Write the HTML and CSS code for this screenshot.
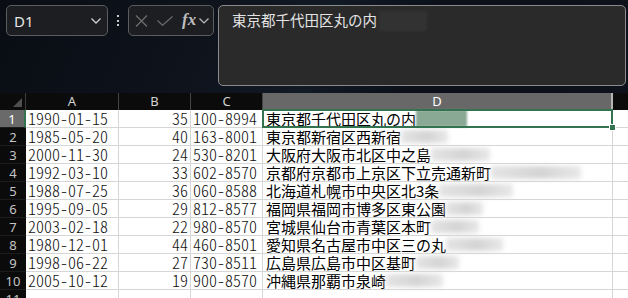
FILE: index.html
```html
<!DOCTYPE html>
<html lang="ja">
<head>
<meta charset="utf-8">
<title>Sheet</title>
<link rel="stylesheet" href="styles.css">
</head>
<body>
<div class="topbar">
  <div class="namebox">
    <span class="ref">D1</span>
    <svg class="chev" width="10" height="6" viewBox="0 0 10 6"><polyline points="0.5,0.5 5,5 9.5,0.5" fill="none" stroke="#cfcfcf" stroke-width="1.3"/></svg>
  </div>
  <div class="dots"><i></i><i></i><i></i></div>
  <div class="fxbox">
    <svg class="icon" width="13" height="12" viewBox="0 0 13 12"><path d="M1 0.5 L12 11.5 M12 0.5 L1 11.5" stroke="#6f6f6f" stroke-width="1.2" fill="none"/></svg>
    <svg class="icon" width="16" height="10" viewBox="0 0 16 10"><polyline points="0.5,4.5 5.5,9.3 15.5,0.5" stroke="#6a6a6a" stroke-width="1.2" fill="none"/></svg>
    <span class="fx">fx</span>
    <svg class="chev2" width="10" height="6" viewBox="0 0 10 6"><polyline points="0.5,0.5 5,5 9.5,0.5" fill="none" stroke="#bdbdbd" stroke-width="1.2"/></svg>
  </div>
  <div class="formula">
    <span class="ftext">東京都千代田区丸の内</span><span class="fblur"></span>
  </div>
</div>

<div class="sheet">
  <div class="corner"><svg width="9" height="9" viewBox="0 0 9 9"><polygon points="9,0 9,9 0,9" fill="#4f4f4f"/></svg></div>
  <div class="ch">A</div><div class="ch">B</div><div class="ch">C</div><div class="ch sel">D</div><div class="ch last"></div>

  <div class="rh rsel">1</div><div class="c t">1990-01-15</div><div class="c n">35</div><div class="c t">100-8994</div><div class="c d active"><span>東京都千代田区丸の内</span><span class="gblur" style="width:51px"></span><i class="handle"></i></div><div class="c e"></div>
  <div class="rh">2</div><div class="c t">1985-05-20</div><div class="c n">40</div><div class="c t">163-8001</div><div class="c d"><span>東京都新宿区西新宿</span><span class="blur" style="width:47px"></span></div><div class="c e"></div>
  <div class="rh">3</div><div class="c t">2000-11-30</div><div class="c n">24</div><div class="c t">530-8201</div><div class="c d"><span>大阪府大阪市北区中之島</span><span class="blur" style="width:59px"></span></div><div class="c e"></div>
  <div class="rh">4</div><div class="c t">1992-03-10</div><div class="c n">33</div><div class="c t">602-8570</div><div class="c d"><span>京都府京都市上京区下立売通新町</span><span class="blur" style="width:90px"></span></div><div class="c e"></div>
  <div class="rh">5</div><div class="c t">1988-07-25</div><div class="c n">36</div><div class="c t">060-8588</div><div class="c d"><span>北海道札幌市中央区北3条</span><span class="blur" style="width:74px"></span></div><div class="c e"></div>
  <div class="rh">6</div><div class="c t">1995-09-05</div><div class="c n">29</div><div class="c t">812-8577</div><div class="c d"><span>福岡県福岡市博多区東公園</span><span class="blur" style="width:37px"></span></div><div class="c e"></div>
  <div class="rh">7</div><div class="c t">2003-02-18</div><div class="c n">22</div><div class="c t">980-8570</div><div class="c d"><span>宮城県仙台市青葉区本町</span><span class="blur" style="width:48px"></span></div><div class="c e"></div>
  <div class="rh">8</div><div class="c t">1980-12-01</div><div class="c n">44</div><div class="c t">460-8501</div><div class="c d"><span>愛知県名古屋市中区三の丸</span><span class="blur" style="width:57px"></span></div><div class="c e"></div>
  <div class="rh">9</div><div class="c t">1998-06-22</div><div class="c n">27</div><div class="c t">730-8511</div><div class="c d"><span>広島県広島市中区基町</span><span class="blur" style="width:43px"></span></div><div class="c e"></div>
  <div class="rh">10</div><div class="c t">2005-10-12</div><div class="c n">19</div><div class="c t">900-8570</div><div class="c d"><span>沖縄県那覇市泉崎</span><span class="blur" style="width:57px"></span></div><div class="c e"></div>
  <div class="rh">11</div><div class="c t"></div><div class="c n"></div><div class="c t"></div><div class="c d"></div><div class="c e"></div>
</div>
</body>
</html>
```

FILE: styles.css
```css
html, body {
  margin: 0;
  padding: 0;
}
body {
  width: 628px;
  height: 298px;
  overflow: hidden;
  background: linear-gradient(112deg, #0a0d14 0%, #0e131c 30%, #121a26 45%, #0b1019 60%, #0d121b 100%);
  font-family: "Noto Sans", "Noto Sans CJK JP", sans-serif;
}

/* ---------- top bar ---------- */
.topbar {
  height: 93px;
  box-sizing: border-box;
  padding: 5px 0 0 6px;
  display: flex;
  align-items: flex-start;
}
.namebox {
  width: 102px;
  height: 31px;
  box-sizing: border-box;
  border: 1px solid #5b5c5f;
  border-radius: 5px;
  background: #1c1e22;
  display: flex;
  align-items: center;
  justify-content: space-between;
  padding: 0 6px 0 7px;
}
.ref {
  color: #e6e6e6;
  font-size: 15px;
  line-height: 20px;
  margin-top: 1px;
}
.chev { margin-top: 1px; }
.dots {
  width: 20px;
  height: 31px;
  display: flex;
  flex-direction: column;
  align-items: center;
  justify-content: center;
  gap: 2.5px;
}
.dots i {
  display: block;
  width: 2px;
  height: 2px;
  background: #c8c8c8;
}
.fxbox {
  width: 86px;
  height: 31px;
  box-sizing: border-box;
  border: 1px solid #5b5c5f;
  border-radius: 5px;
  background: #1c1e22;
  display: flex;
  align-items: center;
  padding: 0 0 0 6px;
}
.fxbox .icon { margin-right: 9px; }
.fx {
  font-family: "Liberation Serif", "DejaVu Serif", serif;
  font-style: italic;
  font-weight: bold;
  font-size: 17px;
  color: #bdbdbd;
  line-height: 20px;
  margin-right: 3px;
  margin-top: -1px;
}
.formula {
  margin-left: 4px;
  width: 408px;
  height: 81px;
  box-sizing: border-box;
  border: 1px solid #8a8a8a;
  border-radius: 5px;
  background: #2a2a2a;
  padding: 4px 0 0 13px;
  display: flex;
  align-items: flex-start;
}
.ftext {
  font-family: "Noto Sans CJK JP", sans-serif;
  font-size: 14.5px;
  line-height: 20px;
  color: #e4e4e4;
}
.fblur {
  display: block;
  width: 48px;
  height: 20px;
  margin-top: 1px;
  margin-left: 2px;
  background: #323232;
  filter: blur(1px);
}

/* ---------- sheet ---------- */
.sheet {
  display: grid;
  grid-template-columns: 26px 93px 72px 72px 350px 15px;
  grid-template-rows: 17px;
  grid-auto-rows: 18px;
}
.corner {
  background: #0b0b0b;
  border-right: 1px solid #3c3c3c;
  box-sizing: border-box;
  display: flex;
  align-items: flex-end;
  justify-content: flex-end;
  padding: 0 3px 3px 0;
}
.ch {
  background: #0b0b0b;
  border-right: 1px solid #454545;
  box-sizing: border-box;
  color: #d2d2d2;
  font-size: 13px;
  line-height: 17px;
  text-align: center;
}
.ch.sel {
  background: #686868;
  color: #ffffff;
  border-right: 2px solid #b5b5b5;
}
.ch.last { border-right: none; }
.rh {
  background: #0b0b0b;
  border-bottom: 1px solid #1c1c1c;
  box-sizing: border-box;
  color: #c4c4c4;
  font-size: 13px;
  line-height: 18px;
  text-align: center;
}
.rh.rsel {
  background: #6a6a6a;
  color: #ffffff;
  border-right: 2px solid #347350;
}
.c {
  background: #ffffff;
  border-right: 1px solid #d6d6d6;
  border-bottom: 1px solid #d6d6d6;
  box-sizing: border-box;
  color: #000000;
  white-space: nowrap;
  font-family: "Noto Sans CJK JP", sans-serif;
}
.c.t, .c.n {
  font-size: 16px;
  font-weight: 300;
  line-height: 17px;
  font-feature-settings: "hwid" 1;
  color: #111111;
  padding: 0 2px;
}
.c.n { text-align: right; }
.c.d {
  font-size: 15px;
  line-height: 17px;
  padding-left: 3px;
  display: flex;
  align-items: center;
}
.c.e { border-right: none; }
.blur {
  display: block;
  height: 13px;
  background: linear-gradient(90deg, #e4e4e4, #d4d4d4 55%, #e8e8e8);
  filter: blur(2.5px);
}
.gblur {
  display: block;
  height: 17px;
  background: #8aa995;
  filter: blur(0.8px);
}
.active {
  position: relative;
  z-index: 2;
}
.active::after {
  content: "";
  position: absolute;
  left: -1px;
  top: -1px;
  right: -1px;
  bottom: -1px;
  border: 2px solid #347350;
  pointer-events: none;
}
.handle {
  position: absolute;
  right: -4px;
  bottom: -4px;
  width: 5px;
  height: 5px;
  background: #347350;
  border: 1px solid #ffffff;
  z-index: 3;
}
```
